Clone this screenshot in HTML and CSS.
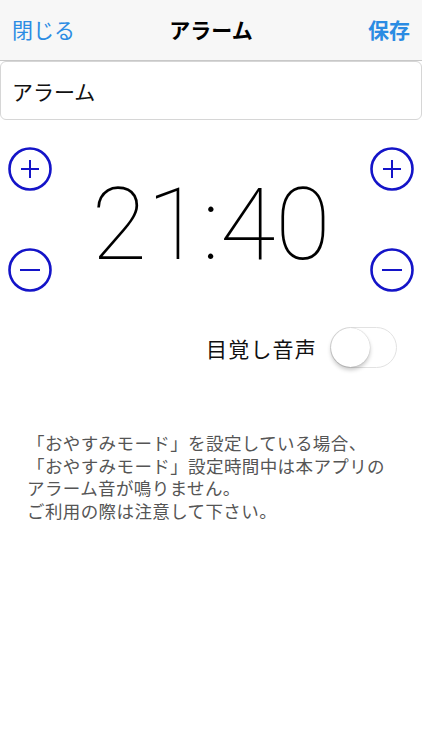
FILE: index.html
```html
<!DOCTYPE html>
<html lang="ja">
<head>
    <meta charset="UTF-8">
    <meta name="viewport" content="width=device-width, initial-scale=1.0">
    <link rel="stylesheet" href="styles.css">
</head>
<body>
    <div class="navbar">
        <span class="nav-btn">閉じる</span>
        <span class="nav-title">アラーム</span>
        <span class="nav-btn nav-save">保存</span>
    </div>

    <div class="name-field">アラーム</div>

    <div class="time-row">
        <div class="stepper">
            <svg class="circle-btn" viewBox="0 0 44 44"><circle cx="22" cy="22" r="20.5"/><path d="M13 22h18M22 13v18"/></svg>
            <svg class="circle-btn" viewBox="0 0 44 44"><circle cx="22" cy="22" r="20.5"/><path d="M12 22h20"/></svg>
        </div>
        <div class="time">21:40</div>
        <div class="stepper">
            <svg class="circle-btn" viewBox="0 0 44 44"><circle cx="22" cy="22" r="20.5"/><path d="M13 22h18M22 13v18"/></svg>
            <svg class="circle-btn" viewBox="0 0 44 44"><circle cx="22" cy="22" r="20.5"/><path d="M12 22h20"/></svg>
        </div>
    </div>

    <div class="voice-row">
        <span class="voice-label">目覚し音声</span>
        <div class="switch"><div class="knob"></div></div>
    </div>

    <div class="note">
        <div>「おやすみモード」を設定している場合、</div>
        <div>「おやすみモード」設定時間中は本アプリの</div>
        <div>アラーム音が鳴りません。</div>
        <div>ご利用の際は注意して下さい。</div>
    </div>
</body>
</html>
```

FILE: styles.css
```css
body {
    margin: 0;
    background: #fff;
    font-family: "Noto Sans CJK JP", sans-serif;
    color: #000;
}
.navbar {
    height: 61px;
    background: #f7f7f7;
    border-bottom: 1px solid #c8c8c8;
    display: flex;
    align-items: center;
    justify-content: space-between;
    padding: 0 12px 3px 12px;
    box-sizing: border-box;
    position: relative;
}
.nav-btn {
    color: #2b8ce3;
    font-size: 21px;
}
.nav-save {
    font-weight: bold;
}
.nav-title {
    font-size: 21px;
    font-weight: bold;
    position: absolute;
    left: 0;
    right: 0;
    text-align: center;
    pointer-events: none;
}
.name-field {
    height: 59px;
    border: 1px solid #d6d6d6;
    border-radius: 6px;
    box-sizing: border-box;
    display: flex;
    align-items: center;
    padding-left: 11px;
    font-size: 21px;
    color: #111;
}
.time-row {
    display: flex;
    justify-content: space-between;
    align-items: center;
    padding: 27px 8px 0 8px;
}
.stepper {
    display: flex;
    flex-direction: column;
    gap: 57px;
}
.circle-btn {
    width: 44px;
    height: 44px;
    display: block;
}
.circle-btn circle {
    fill: none;
    stroke: #1414c8;
    stroke-width: 2.6;
}
.circle-btn path {
    stroke: #1414c8;
    stroke-width: 2;
}
.time {
    font-family: Roboto, sans-serif;
    font-weight: 100;
    font-size: 101px;
    line-height: 1;
    margin-top: 10px;
    letter-spacing: 0;
}
.voice-row {
    display: flex;
    justify-content: flex-end;
    align-items: center;
    gap: 13px;
    padding-right: 25px;
    margin-top: 35px;
}
.voice-label {
    font-size: 21px;
    letter-spacing: 1.2px;
    color: #111;
}
.switch {
    width: 67px;
    height: 41px;
    border: 1px solid #e2e2e2;
    border-radius: 21px;
    box-sizing: border-box;
    position: relative;
}
.knob {
    position: absolute;
    left: 0;
    top: 0;
    width: 39px;
    height: 39px;
    border-radius: 50%;
    background: #fff;
    box-shadow: 0 3px 4px rgba(0, 0, 0, 0.22), 0 0 1px rgba(0, 0, 0, 0.3);
}
.note {
    margin-top: 64px;
    padding-left: 27px;
    font-size: 17.5px;
    line-height: 22.5px;
    letter-spacing: 0.4px;
    color: #555;
}
```
